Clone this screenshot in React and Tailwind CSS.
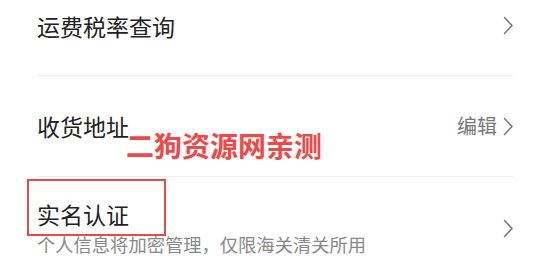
import React from "react";

function Chevron({ className = "" }) {
  return (
    <svg width="11" height="19" viewBox="0 0 11 19" className={className} fill="none">
      <path d="M1.5 1.5 L9 9.5 L1.5 17.5" stroke="#7a7a7a" strokeWidth="1.6" strokeLinecap="round" strokeLinejoin="round" />
    </svg>
  );
}

export default function App() {
  return (
    <div
      className="relative w-[550px] h-[275px] overflow-hidden bg-white"
      style={{ fontFamily: '"Noto Sans CJK SC", "Noto Sans", sans-serif' }}
    >
      <div className="px-[37px]">
        <div className="h-[76px] border-b border-[#eeeeee]">
          <div className="h-[51px] flex items-center justify-between">
            <span className="text-[23px] leading-[26px] text-[#222222]">运费税率查询</span>
            <Chevron className="mr-[-1px]" />
          </div>
        </div>
        <div className="h-[101px] border-b border-[#eeeeee] flex items-center justify-between">
          <span className="text-[23px] leading-[26px] text-[#222222]">收货地址</span>
          <div className="flex items-center gap-[6px]">
            <span className="text-[20px] leading-[24px] text-[#777777]">编辑</span>
            <Chevron className="mr-[-1px]" />
          </div>
        </div>
        <div className="flex items-center justify-between pt-[22px]">
          <div className="flex flex-col">
            <span className="text-[23px] leading-[30px] text-[#222222]">实名认证</span>
            <span className="text-[18.3px] leading-[24px] text-[#888888] mt-[3px]">
              个人信息将加密管理，仅限海关清关所用
            </span>
          </div>
          <Chevron className="mr-[-1px] mt-[2px]" />
        </div>
      </div>

      <div className="absolute left-[126px] top-[128px] text-[28px] leading-[34px] font-bold text-[#f04848]">
        二狗资源网亲测
      </div>
      <div className="absolute left-[27px] top-[179px] w-[139px] h-[57px] border-[2px] border-[#e84a4a]" />
    </div>
  );
}
